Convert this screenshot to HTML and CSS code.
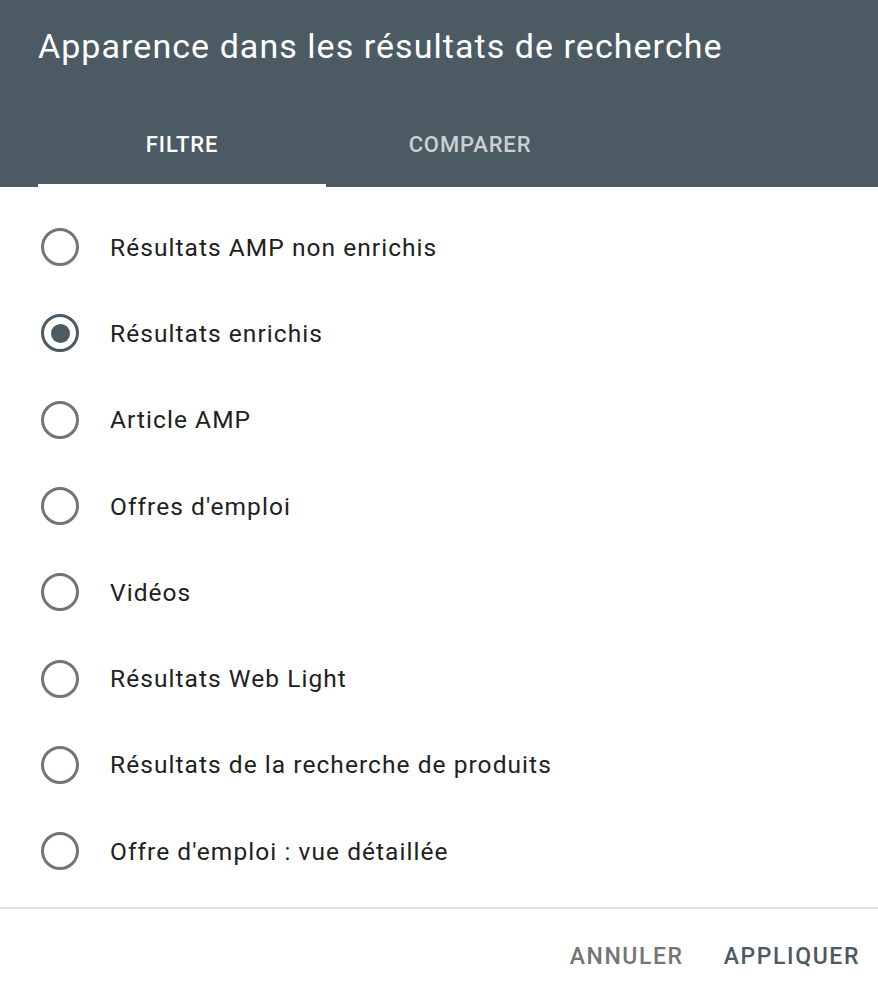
FILE: index.html
```html
<!DOCTYPE html>
<html lang="fr">
<head>
<meta charset="utf-8">
<link rel="stylesheet" href="styles.css">
</head>
<body>
<div class="dialog">
  <header class="header">
    <h1 class="title">Apparence dans les résultats de recherche</h1>
    <nav class="tabs">
      <div class="tab active">FILTRE</div>
      <div class="tab">COMPARER</div>
    </nav>
  </header>
  <ul class="options">
    <li class="option"><span class="radio"></span><span class="label">Résultats AMP non enrichis</span></li>
    <li class="option"><span class="radio checked"></span><span class="label">Résultats enrichis</span></li>
    <li class="option"><span class="radio"></span><span class="label">Article AMP</span></li>
    <li class="option"><span class="radio"></span><span class="label">Offres d'emploi</span></li>
    <li class="option"><span class="radio"></span><span class="label">Vidéos</span></li>
    <li class="option"><span class="radio"></span><span class="label">Résultats Web Light</span></li>
    <li class="option"><span class="radio"></span><span class="label">Résultats de la recherche de produits</span></li>
    <li class="option"><span class="radio"></span><span class="label">Offre d'emploi : vue détaillée</span></li>
  </ul>
  <footer class="footer">
    <button class="btn cancel">ANNULER</button>
    <button class="btn apply">APPLIQUER</button>
  </footer>
</div>
</body>
</html>
```
FILE: styles.css
```css
html, body {
  margin: 0;
  padding: 0;
  background: #ffffff;
}
body {
  font-family: Roboto, "Liberation Sans", sans-serif;
  width: 878px;
  height: 996px;
  overflow: hidden;
}
.dialog {
  display: flex;
  flex-direction: column;
  height: 996px;
}
.header {
  background: #4b5a63;
  padding: 0 0 0 38px;
  height: 187px;
  display: flex;
  flex-direction: column;
  box-sizing: border-box;
}
.title {
  margin: 0;
  padding-top: 24px;
  font-size: 34px;
  font-weight: 400;
  line-height: 44px;
  color: #ffffff;
  letter-spacing: 1.05px;
}
.tabs {
  display: flex;
  margin-top: auto;
}
.tab {
  width: 288px;
  height: 84px;
  box-sizing: border-box;
  display: flex;
  align-items: center;
  justify-content: center;
  padding-top: 1px;
  font-size: 22px;
  font-weight: 500;
  letter-spacing: 0.85px;
  color: rgba(255, 255, 255, 0.72);
  border-bottom: 3px solid transparent;
}
.tab.active {
  color: #ffffff;
  border-bottom-color: #ffffff;
}
.options {
  list-style: none;
  margin: 0;
  padding: 17px 0 13px 0;
}
.option {
  height: 86.3px;
  display: flex;
  align-items: center;
  padding-left: 41px;
}
.radio {
  width: 38px;
  height: 38px;
  box-sizing: border-box;
  border: 3.5px solid #757575;
  border-radius: 50%;
  display: flex;
  align-items: center;
  justify-content: center;
  flex: none;
}
.radio.checked {
  border-color: #4b5a63;
}
.radio.checked::after {
  content: "";
  width: 19px;
  height: 19px;
  border-radius: 50%;
  background: #4b5a63;
}
.label {
  margin-left: 31px;
  font-size: 24.5px;
  color: #212121;
  letter-spacing: 1.05px;
}
.footer {
  border-top: 2px solid #e2e2e2;
  display: flex;
  justify-content: flex-end;
  align-items: center;
  height: 86px;
  box-sizing: border-box;
  padding: 11px 18px 0 0;
  gap: 40px;
}
.btn {
  background: none;
  border: none;
  padding: 0;
  font-family: Roboto, "Liberation Sans", sans-serif;
  font-size: 23px;
  font-weight: 500;
  letter-spacing: 1.6px;
}
.cancel {
  color: #757575;
}
.apply {
  color: #4b5a63;
}
```
